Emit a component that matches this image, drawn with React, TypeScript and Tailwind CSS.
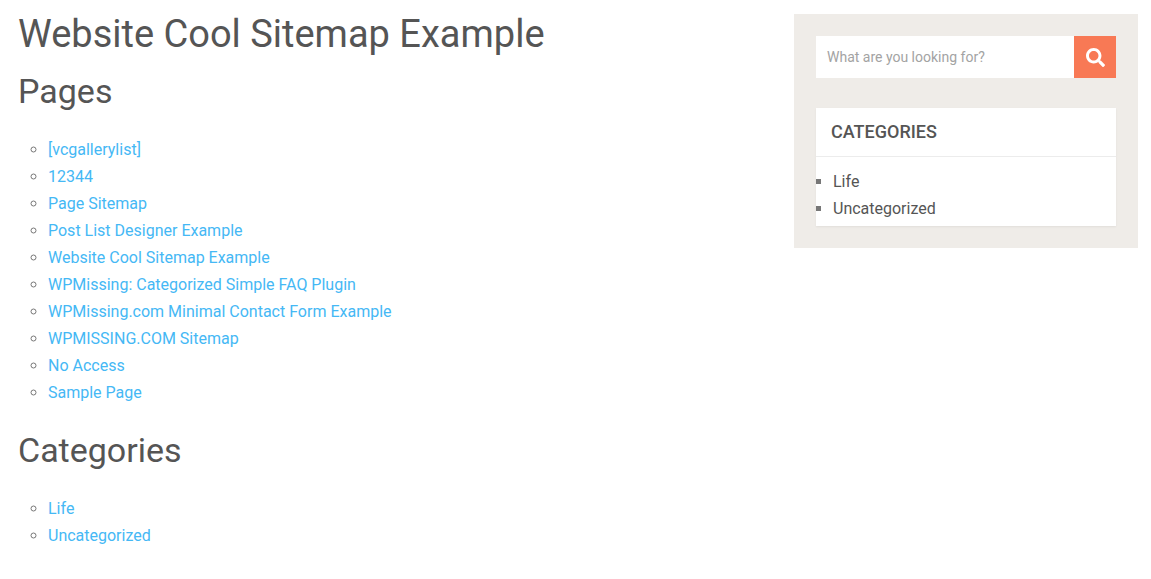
import React from "react";
import { FaSearch } from "react-icons/fa";

const pages = ["[vcgallerylist]","12344","Page Sitemap","Post List Designer Example","Website Cool Sitemap Example","WPMissing: Categorized Simple FAQ Plugin","WPMissing.com Minimal Contact Form Example","WPMISSING.COM Sitemap","No Access","Sample Page"];
const List = ({ items }: { items: string[] }) => (
  <ul className="list-[circle] pl-[30px] marker:text-[#777]">
    {items.map((t) => (
      <li key={t} className="h-[27px] leading-[27px]"><a className="text-[#45b8f5]">{t}</a></li>
    ))}
  </ul>
);
export default function App() {
  return (
    <div className="flex h-[579px] bg-white pl-[18px] pt-[14px] text-[16px] text-[#555]" style={{ fontFamily: "Roboto, sans-serif" }}>
      <main className="w-[776px] shrink-0">
        <h1 className="text-[38px] leading-[40px]">Website Cool Sitemap Example</h1>
        <h2 className="mt-[19px] text-[34px] leading-[36px]">Pages</h2>
        <div className="mt-[27px]"><List items={pages} /></div>
        <h2 className="mt-[26px] text-[34px] leading-[36px]">Categories</h2>
        <div className="mt-[27px]"><List items={["Life","Uncategorized"]} /></div>
      </main>
      <aside className="h-[234px] w-[344px] shrink-0 bg-[#efece8] p-[22px]">
        <div className="flex h-[42px] bg-white">
          <div className="flex-1 pl-[11px] text-[14px] leading-[42px] text-[#a3a3a3]">What are you looking for?</div>
          <div className="flex w-[42px] items-center justify-center bg-[#f87955] text-white"><FaSearch size={19} /></div>
        </div>
        <div className="mt-[30px] h-[118px] bg-white shadow-[0_1px_2px_rgba(0,0,0,0.06)]">
          <div className="h-[49px] border-b border-[#ececec] pl-[15px] text-[18px] font-medium leading-[48px]">CATEGORIES</div>
          <ul className="list-[square] pl-[17px] pt-[11px] marker:text-[#777]">
            <li className="h-[27px] leading-[27px]">Life</li>
            <li className="h-[27px] leading-[27px]">Uncategorized</li>
          </ul>
        </div>
      </aside>
    </div>
  );
}
